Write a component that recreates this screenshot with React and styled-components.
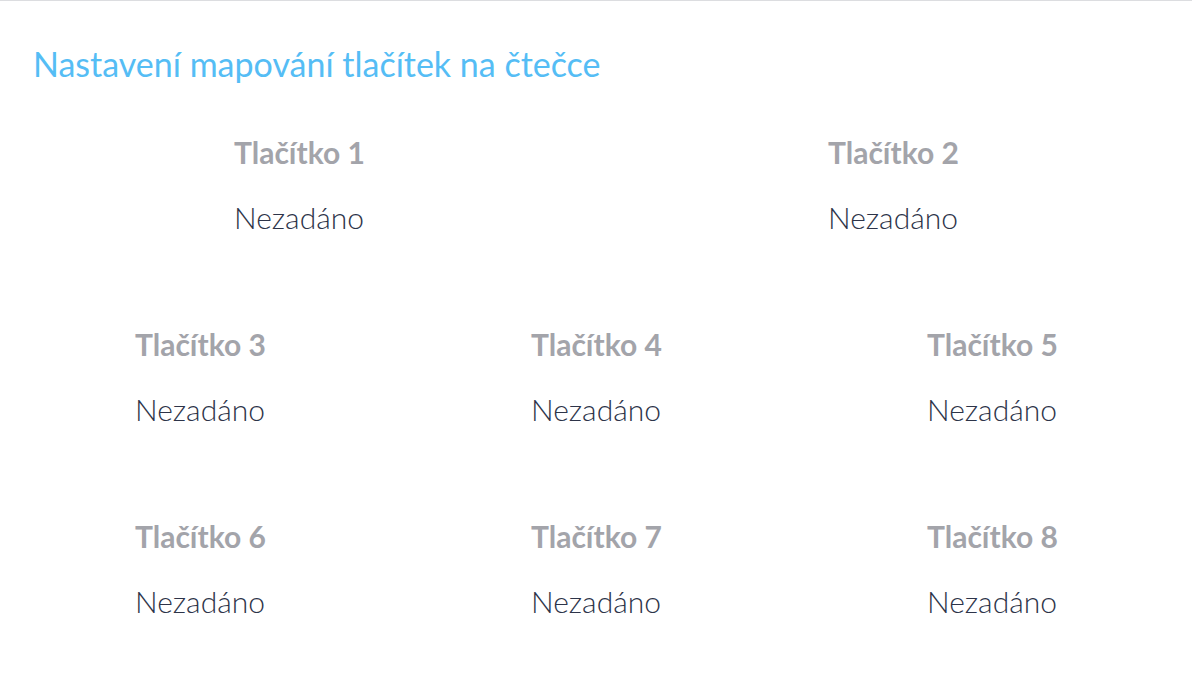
import styled, { createGlobalStyle } from "styled-components";

const GlobalStyle = createGlobalStyle`
  body {
    margin: 0;
    background: #ffffff;
    font-family: Lato, "Open Sans", sans-serif;
  }
`;

const rows = [
  [1, 2],
  [3, 4, 5],
  [6, 7, 8],
];

function App() {
  return (
    <Page>
      <GlobalStyle />
      <Title>Nastavení mapování tlačítek na čtečce</Title>
      <Grid>
        {rows.map((row, i) => (
          <Row key={i} $cols={row.length}>
            {row.map((n) => (
              <Item key={n}>
                <Label>Tlačítko {n}</Label>
                <Value>Nezadáno</Value>
              </Item>
            ))}
          </Row>
        ))}
      </Grid>
    </Page>
  );
}

const Page = styled.div`
  border-top: 1px solid #dcdde0;
  min-height: 687px;
  box-sizing: border-box;
`;

const Title = styled.h1`
  margin: 0;
  padding: 43px 0 0 33px;
  font-size: 34px;
  font-weight: 400;
  line-height: 40px;
  color: #55bdf5;
`;

const Grid = styled.div`
  display: flex;
  flex-direction: column;
  gap: 91px;
  padding: 50px 2px 0;
`;

const Row = styled.div`
  display: grid;
  grid-template-columns: repeat(${(p) => p.$cols}, 1fr);
  justify-items: center;
`;

const Item = styled.div`
  display: flex;
  flex-direction: column;
  gap: 29px;
  width: 130px;
`;

const Label = styled.div`
  font-size: 30px;
  font-weight: 700;
  line-height: 36px;
  white-space: nowrap;
  color: #a3a4aa;
`;

const Value = styled.div`
  font-size: 30px;
  font-weight: 300;
  line-height: 36px;
  white-space: nowrap;
  color: #2d3449;
`;

export default App;
